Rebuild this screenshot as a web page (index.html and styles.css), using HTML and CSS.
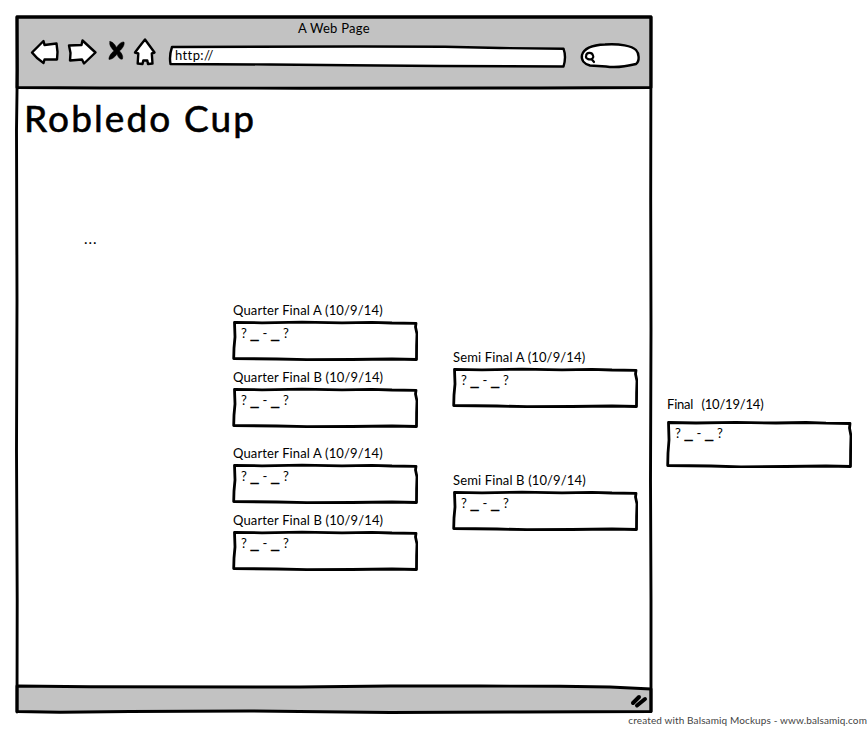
FILE: index.html
```html
<!DOCTYPE html>
<html lang="en">
<head>
<meta charset="utf-8">
<title>Robledo Cup</title>
<link rel="stylesheet" href="styles.css">
</head>
<body>
<svg class="defs" aria-hidden="true">
  <symbol id="box" viewBox="0 0 186 42">
    <path d="M2.500 2.300L30 2.800L70 2.200L110 2.800L140 2.300L160 3L184 3.300L183.500 7L185 14L184.600 26L184.500 39.500L160 39L120 39.500L75 39.700L45 39L1.700 38.500L2 28L3 17Z"/>
  </symbol>
  <symbol id="tallbox" viewBox="0 0 186 48">
    <path d="M2.500 2.500L30 3L70 2.400L110 3L140 2.500L160 3.200L184 3.500L183.500 8L185 16L184.600 31L184.500 46.500L160 46L120 46.500L75 47L45 46L1.700 45.500L2 33L3 20Z"/>
  </symbol>
</svg>
<div class="canvas">
  <section class="browser">
    <svg class="frame" viewBox="15 15 637 698" aria-hidden="true">
      <path class="chrome" d="M17 17H651V87.500L540 88L300 88.200L100 88L17 87.500Z"/>
      <path class="chrome" d="M17 686L90 686.700L300 687L390 686L480 686L560 686.300L610 687L651 689V711.500L520 712L390 712.500L250 711L130 711.500L60 712.300L17 711.500Z"/>
      <path d="M17 17L651 17L650.700 200L651 330L650.500 480L651 600L651 711.500M17 17L17.300 70L16.500 130L17 300L16.500 450L17.200 600L17 712"/>
    </svg>
    <header class="toolbar">
      <div class="window-title">A Web Page</div>
      <div class="controls">
        <svg class="nav" viewBox="28 36 132 32" aria-hidden="true">
          <path d="M32 52.500L43.500 41L44.500 45L56.500 43.500L57.500 52L57 59.500L44.500 59.500L43.500 63Q37 59 32 52.500Z"/>
          <path d="M69 45.500L81.500 45L82.500 40.500L95.500 52.500L84 63.500L82 59.500L70 60.500L70.500 53Z"/>
          <path class="cross" d="M110 41.500C108.500 45 112 48.500 114 51C111 53 108.500 57 109 59.500C112 59.500 115.500 56.500 117 54C118 57 120 60 122.500 59C123.500 56 121.500 53 119.500 51C122 49 125 45 124 42C121 41.500 118 45 116.500 47.500C115 44.500 112.500 41.500 110 41.500Z"/>
          <path d="M145 39.500L154.500 52.500L151.800 53.500L152.500 63.500L148 64L147.300 60.500L143.300 60.500L142.500 64L137.700 63.500L138.300 53.500L135 52.500Q139 47 145 39.500Z"/>
        </svg>
        <div class="address">
          <svg viewBox="168 43 400 26" aria-hidden="true"><path d="M172 47L360 46.500L445 46.800L500 48L563.500 48.700Q566.500 57 563.500 66.500L440 66L350 65.200L270 64.500L170.500 64Q169 56 172 47Z"/></svg>
          <span>http://</span>
        </div>
        <svg class="search" viewBox="578 40 64 30" aria-hidden="true">
          <path d="M590 65.500C584 64 581 60 582 55C584 48 593 45 605 44.500C620 43.500 632 46 636 50C639 53 640 61 636 64C628 66 616 68 606 66.500Z"/>
          <path class="lens" d="M593 55.500C592 52 586.500 52 586 56C585.500 59 590 60.500 592.500 58.500Q594 57 593 55.500M591.500 59L594 62"/>
        </svg>
      </div>
    </header>
    <main class="content">
      <h1>Robledo Cup</h1>
      <p class="dots">...</p>
      <div class="bracket">
        <div class="round quarters">
          <div class="pair">
            <div class="match"><div class="label">Quarter Final A (10/9/14)</div><div class="score"><svg><use href="#box"/></svg><span>? <i>_</i> - <i>_</i> ?</span></div></div>
            <div class="match"><div class="label">Quarter Final B (10/9/14)</div><div class="score"><svg><use href="#box"/></svg><span>? <i>_</i> - <i>_</i> ?</span></div></div>
          </div>
          <div class="pair">
            <div class="match"><div class="label">Quarter Final A (10/9/14)</div><div class="score"><svg><use href="#box"/></svg><span>? <i>_</i> - <i>_</i> ?</span></div></div>
            <div class="match"><div class="label">Quarter Final B (10/9/14)</div><div class="score"><svg><use href="#box"/></svg><span>? <i>_</i> - <i>_</i> ?</span></div></div>
          </div>
        </div>
        <div class="round semis">
          <div class="match"><div class="label">Semi Final A (10/9/14)</div><div class="score"><svg><use href="#box"/></svg><span>? <i>_</i> - <i>_</i> ?</span></div></div>
          <div class="match"><div class="label">Semi Final B (10/9/14)</div><div class="score"><svg><use href="#box"/></svg><span>? <i>_</i> - <i>_</i> ?</span></div></div>
        </div>
      </div>
    </main>
    <footer class="status">
      <svg viewBox="629 692 20 18" aria-hidden="true"><path d="M633 703L639 697"/><path d="M637 705.500L645 699"/></svg>
    </footer>
  </section>
  <section class="final">
    <div class="match"><div class="label">Final&nbsp; (10/19/14)</div><div class="score"><svg><use href="#tallbox"/></svg><span>? <i>_</i> - <i>_</i> ?</span></div></div>
  </section>
</div>
<div class="credit">created with Balsamiq Mockups - www.balsamiq.com</div>
</body>
</html>
```
FILE: styles.css
```css
* { box-sizing: border-box; }
body {
  margin: 0;
  width: 867px;
  height: 729px;
  overflow: hidden;
  background: #fff;
  color: #000;
  font: 13px/18px Lato, "Liberation Sans", sans-serif;
}
svg {
  display: block;
  fill: #fff;
  stroke: #000;
  stroke-width: 2.4;
  stroke-linejoin: round;
  stroke-linecap: round;
  overflow: visible;
}
.defs { position: absolute; width: 0; height: 0; }
.canvas { display: flex; padding: 15px 0 0 15px; }
.browser {
  position: relative;
  display: flex;
  flex-direction: column;
  width: 637px;
  height: 698px;
}
.frame {
  position: absolute;
  inset: 0;
  z-index: -1;
  width: 637px;
  height: 698px;
  fill: none;
  stroke-width: 2.9;
}
.chrome { fill: #c2c2c2; }
.toolbar { height: 73px; padding-top: 4px; }
.window-title {
  padding-left: 283px;
  font-size: 13px;
  letter-spacing: 0.25px;
}
.controls { display: flex; align-items: center; height: 36px; padding-left: 13px; }
.nav { width: 132px; height: 32px; margin-bottom: 6px; }
.cross { fill: #000; stroke-width: 0.5; }
.address { position: relative; width: 400px; height: 26px; margin: 2px 0 0 8px; padding: 3px 0 0 7px; }
.address svg, .score svg { position: absolute; inset: 0; z-index: -1; }
.address svg { width: 400px; height: 26px; }
.address span { letter-spacing: 0.4px; }
.search { width: 64px; height: 30px; margin-left: 10px; }
.lens { stroke-width: 2.2; }
.content { flex: 1; }
h1 {
  margin: 0;
  padding: 7px 0 0 9px;
  font-size: 37px;
  line-height: 46px;
  font-weight: 400;
  letter-spacing: 2.1px;
  -webkit-text-stroke: 0.6px #000;
}
.dots { margin: 88px 0 0 69px; font-size: 15px; letter-spacing: 1px; }
.bracket { display: flex; gap: 34px; padding: 54px 0 0 217px; }
.round { display: flex; flex-direction: column; width: 186px; }
.quarters { gap: 15px; }
.pair { display: flex; flex-direction: column; gap: 6px; }
.semis { gap: 62px; padding-top: 47px; }
.label { height: 19px; padding-left: 1px; white-space: nowrap; letter-spacing: 0.14px; }
.score { position: relative; width: 186px; height: 42px; padding: 4px 0 0 9px; }
.score svg { width: 186px; height: 42px; stroke-width: 2.8; }
.score span { letter-spacing: 0.3px; }
.score i { font: 14px/14px "Liberation Sans", sans-serif; -webkit-text-stroke: 0.4px #000; }
.final { padding: 380px 0 0 14px; }
.final .label { height: 25px; letter-spacing: -0.2px; word-spacing: 1px; }
.final .score, .final .score svg { height: 48px; }
.status { display: flex; justify-content: flex-end; height: 27px; padding: 6px 3px 0 0; }
.status svg { width: 20px; height: 18px; fill: none; stroke-width: 4; }
.credit {
  height: 14px;
  color: #444;
  font-size: 10px;
  line-height: 14px;
  text-align: right;
  letter-spacing: 0.12px;
}
```
